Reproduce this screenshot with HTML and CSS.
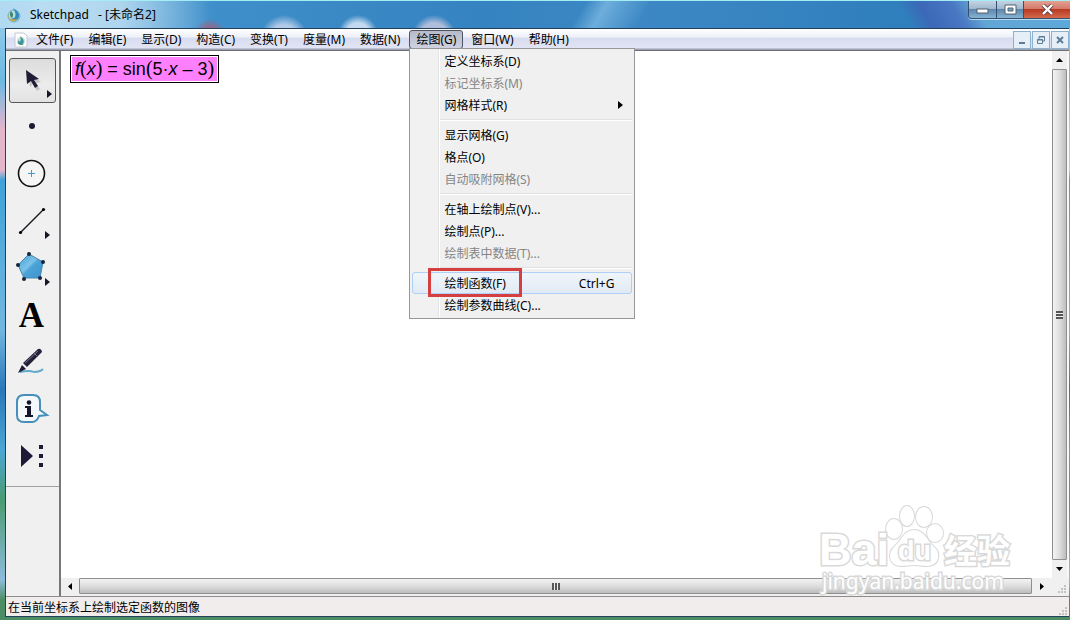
FILE: index.html
```html
<!DOCTYPE html>
<html lang="zh-CN">
<head>
    <meta charset="UTF-8">
    <meta name="viewport" content="width=device-width, initial-scale=1.0">
    <title>Sketchpad - [未命名2]</title>
    <link rel="stylesheet" href="styles.css">
</head>
<body>
    <header class="titlebar">
        <svg class="app-icon" viewBox="0 0 16 16" width="16" height="16">
            <circle cx="8" cy="9" r="6" fill="#b9dfe6" stroke="#6fa9c5"/>
            <path d="M7 1c5 3 8 7 5 11-2 3-6 2-6-1 4 1 5-4 1-10z" fill="#3287bb"/>
            <path d="M2 7c1 5 4 6 9 5-2 4-9 3-9-5z" fill="#c9a441"/>
            <path d="M5 4c2 2 3 4 1 7-2-1-3-4-1-7z" fill="#3c8c6c"/>
        </svg>
        <h1 class="title">Sketchpad&nbsp;&nbsp; - [未命名2]</h1>
        <div class="window-buttons">
            <button class="win-btn" aria-label="最小化">
                <svg width="13" height="11" viewBox="0 0 13 11"><rect x="1" y="5" width="11" height="4" fill="#fff" stroke="#53606c"/></svg>
            </button>
            <button class="win-btn win-max" aria-label="最大化">
                <svg width="13" height="11" viewBox="0 0 13 11"><path d="M1 1h11v9H1z" fill="#fff" stroke="#53606c"/><path d="M4 4h5v3H4z" fill="#6fa3c8" stroke="#53606c"/></svg>
            </button>
            <button class="win-btn win-close" aria-label="关闭">
                <svg width="13" height="11" viewBox="0 0 13 11"><path d="M2 1l9 9M11 1l-9 9" stroke="#66404a" stroke-width="4"/><path d="M2 1l9 9M11 1l-9 9" stroke="#fff" stroke-width="2.4"/></svg>
            </button>
        </div>
    </header>

    <div class="window">
        <nav class="menubar">
            <svg class="doc-icon" viewBox="0 0 14 16" width="14" height="16">
                <path d="M1 1h9l3 3v11H1z" fill="#fff" stroke="#c3c8d3"/>
                <circle cx="7" cy="9" r="4" fill="#c7e2cd"/>
                <path d="M6 4c4 3 5 6 2 9-4 0-5-3-3-5 0 3 3 2 1-4z" fill="#3d93a5"/>
                <path d="M3 9c1 3 4 4 7 3-2 2-6 1-7-3z" fill="#4b9b52"/>
            </svg>
            <button class="menu-btn">文件(F)</button>
            <button class="menu-btn">编辑(E)</button>
            <button class="menu-btn">显示(D)</button>
            <button class="menu-btn">构造(C)</button>
            <button class="menu-btn">变换(T)</button>
            <button class="menu-btn">度量(M)</button>
            <button class="menu-btn">数据(N)</button>
            <div class="menu-wrap">
                <button class="menu-btn open" aria-expanded="true">绘图(G)</button>
                <div class="dropdown">
                    <button class="item">定义坐标系(D)</button>
                    <button class="item" disabled>标记坐标系(M)</button>
                    <button class="item">网格样式(R)
                        <svg width="5" height="8" viewBox="0 0 5 8"><path d="M0 0l5 4-5 4z"/></svg>
                    </button>
                    <hr>
                    <button class="item">显示网格(G)</button>
                    <button class="item">格点(O)</button>
                    <button class="item" disabled>自动吸附网格(S)</button>
                    <hr>
                    <button class="item">在轴上绘制点(V)...</button>
                    <button class="item">绘制点(P)...</button>
                    <button class="item" disabled>绘制表中数据(T)...</button>
                    <hr>
                    <button class="item active">绘制函数(F)<span class="shortcut">Ctrl+G</span><span class="mark"></span></button>
                    <button class="item">绘制参数曲线(C)...</button>
                </div>
            </div>
            <button class="menu-btn">窗口(W)</button>
            <button class="menu-btn">帮助(H)</button>
            <div class="doc-buttons">
                <button class="doc-btn" aria-label="最小化文档">
                    <svg width="10" height="10" viewBox="0 0 10 10"><path d="M2 8h6" stroke="#5d7d99" stroke-width="2"/></svg>
                </button>
                <button class="doc-btn" aria-label="还原文档">
                    <svg width="10" height="10" viewBox="0 0 10 10" fill="none" stroke="#5d7d99"><path d="M3 4V1.500h5.500V6H7M3 2h6M1.500 4.500h5v4h-5zM1 5h6"/></svg>
                </button>
                <button class="doc-btn" aria-label="关闭文档">
                    <svg width="10" height="10" viewBox="0 0 10 10"><path d="M2 2l6 6M8 2l-6 6" stroke="#5d7d99" stroke-width="2"/></svg>
                </button>
            </div>
        </nav>

        <div class="workspace">
            <aside class="toolbox">
                <button class="tool selected" aria-label="移动箭头工具">
                    <svg viewBox="0 0 45 43" width="45" height="43">
                        <path d="M18 13l2 15 3-3 4 7 3-2-4-6 5-1z" fill="#999" opacity=".45"/>
                        <path d="M16 11l1 14 4-3 4 7 3-2-4-6 5-1z" fill="#211b36"/>
                        <path d="M37 31l5 4-5 4z" fill="#191526"/>
                    </svg>
                </button>
                <button class="tool" aria-label="点工具">
                    <svg viewBox="0 0 45 43" width="45" height="43"><circle cx="22" cy="20" r="3" fill="#1e1935"/></svg>
                </button>
                <button class="tool" aria-label="圆工具">
                    <svg viewBox="0 0 45 43" width="45" height="43">
                        <circle cx="21.500" cy="20.500" r="13" fill="#f5f5f5" stroke="#111" stroke-width="1.600"/>
                        <path d="M18 20.500h7M21.500 17v7" stroke="#3e9bcc"/>
                    </svg>
                </button>
                <button class="tool" aria-label="线段工具">
                    <svg viewBox="0 0 45 43" width="45" height="43">
                        <path d="M10 33L34 9" stroke="#1b1b24" stroke-width="1.400"/>
                        <circle cx="10.500" cy="32.500" r="1.600"/><circle cx="33.500" cy="9.500" r="1.600"/>
                        <path d="M35 31l5 4-5 4z" fill="#191526"/>
                    </svg>
                </button>
                <button class="tool" aria-label="多边形工具">
                    <svg viewBox="0 0 45 43" width="45" height="43">
                        <defs>
                            <linearGradient id="poly" x1="0" y1="0" x2="1" y2="1">
                                <stop offset="0" stop-color="#3f9ad0"/>
                                <stop offset=".45" stop-color="#7cc3ea"/>
                                <stop offset=".55" stop-color="#4ba2d6"/>
                                <stop offset="1" stop-color="#3c94cc"/>
                            </linearGradient>
                        </defs>
                        <path d="M19 7l14 8-3 16H14L8 18z" fill="url(#poly)" stroke="#4288b2"/>
                        <g fill="#17243d"><circle cx="19" cy="7" r="2"/><circle cx="33" cy="15" r="2"/><circle cx="30" cy="31" r="2"/><circle cx="14" cy="32" r="2"/><circle cx="8" cy="18" r="2"/></g>
                        <path d="M35 31l5 4-5 4z" fill="#191526"/>
                    </svg>
                </button>
                <button class="tool tool-text" aria-label="文本工具">A</button>
                <button class="tool" aria-label="标识工具">
                    <svg viewBox="0 0 45 43" width="45" height="43">
                        <path d="M10 31q9-2 14 0 6 0 9-3" fill="none" stroke="#5fa9c9" stroke-width="1.800"/>
                        <path d="M8 32l4-8 4 4z" fill="#1e1935"/>
                        <path d="M13 22L28 8q3-1 4 3L17 26z" fill="#25203a"/>
                        <path d="M15 22L28 10M24 12l4 4" stroke="#77728c" fill="none"/>
                    </svg>
                </button>
                <button class="tool" aria-label="信息工具">
                    <svg viewBox="0 0 45 43" width="45" height="43">
                        <path d="M14 7h9q7 0 7 7v8l7 5-8 1q-2 6-7 6h-8q-7 0-7-7V14q0-7 7-7z" fill="#f4f8fa" stroke="#458fba" stroke-width="2"/>
                        <circle cx="19" cy="14.500" r="2.300" fill="#16142a"/>
                        <path d="M15 18h6v9h2v2h-8v-2h2v-7h-2z" fill="#16142a"/>
                    </svg>
                </button>
                <button class="tool" aria-label="自定义工具">
                    <svg viewBox="0 0 45 43" width="45" height="43" fill="#1e1935">
                        <path d="M11 10l12 11-12 11z"/><path d="M29 10h4v4h-4zM29 19h4v4h-4zM29 28h4v4h-4z"/>
                    </svg>
                </button>
            </aside>

            <main class="sketch">
                <div class="formula"><i>f</i><span class="paren">(</span><i>x</i><span class="paren">)</span> = sin<span class="paren">(</span>5·<i>x</i> – 3<span class="paren">)</span></div>
            </main>

            <div class="scroll vscroll">
                <button class="arrow" aria-label="向上滚动"><svg width="7" height="4" viewBox="0 0 7 4"><path d="M0 4l3.500-4L7 4z"/></svg></button>
                <div class="thumb"><span class="grip"></span></div>
                <button class="arrow" aria-label="向下滚动"><svg width="7" height="4" viewBox="0 0 7 4"><path d="M0 0l3.500 4L7 0z"/></svg></button>
            </div>
            <div class="scroll hscroll">
                <button class="arrow" aria-label="向左滚动"><svg width="4" height="7" viewBox="0 0 4 7"><path d="M4 0L0 3.500 4 7z"/></svg></button>
                <div class="thumb"><span class="grip"></span></div>
                <button class="arrow" aria-label="向右滚动"><svg width="4" height="7" viewBox="0 0 4 7"><path d="M0 0l4 3.500L0 7z"/></svg></button>
            </div>
            <div class="corner"><svg class="size-grip" width="10" height="10" viewBox="0 0 10 10"><path d="M7 1h2v2H7zM4 4h2v2H4zM7 4h2v2H7zM1 7h2v2H1zM4 7h2v2H4zM7 7h2v2H7z"/></svg></div>
        </div>

        <footer class="statusbar">
            <span>在当前坐标系上绘制选定函数的图像</span>
            <svg class="size-grip" width="10" height="10" viewBox="0 0 10 10"><path d="M7 1h2v2H7zM4 4h2v2H4zM7 4h2v2H7zM1 7h2v2H1zM4 7h2v2H4zM7 7h2v2H7z"/></svg>
        </footer>
    </div>

    <svg class="watermark" width="200" height="100" viewBox="0 0 200 100">
        <g class="wm-shape">
            <ellipse cx="84" cy="38" rx="8" ry="10"/>
            <ellipse cx="97" cy="25" rx="7" ry="10"/>
            <ellipse cx="114" cy="26" rx="8" ry="10"/>
            <ellipse cx="125" cy="42" rx="8" ry="9"/>
            <path d="M104 39c10 0 13 10 19 16 9 7 6 20-6 20-5 0-8-1-13-1s-8 1-13 1c-11 0-15-12-6-20 7-6 9-16 19-16z"/>
        </g>
        <text class="wm-brand" x="9" y="74">Bai</text>
        <text class="wm-du" x="88" y="69">du</text>
        <text class="wm-cjk" x="134" y="72">经验</text>
        <text class="wm-url" x="12" y="98">jingyan.baidu.com</text>
    </svg>
</body>
</html>
```
FILE: styles.css
```css
* {
    box-sizing: border-box;
}
body {
    margin: 0;
    height: 100vh;
    display: flex;
    flex-direction: column;
    overflow: hidden;
    position: relative;
    font-family: "Noto Sans", "Noto Sans CJK SC", sans-serif;
    font-size: 12px;
    color: #000;
    background: linear-gradient(#9ed2ee 0, #6bb9e3 80px, #e5b5cc 130px, #e5b5cc 170px, #3fa2d8 180px, #71b7e0 330px, #2a77b9 390px, #4ba7d5 450px, #4a9b72 500px, #8dbcdb 580px, #4c8d63 600px);
}
button {
    font: inherit;
    color: inherit;
    padding: 0;
    margin: 0;
    border: none;
    background: none;
}
svg {
    display: block;
    flex: none;
}

/* title bar */
.titlebar {
    height: 28px;
    flex: none;
    display: flex;
    align-items: center;
    padding-left: 6px;
    border-top: 1px solid #a5edf5;
    background:
        radial-gradient(circle at 210px 34px, #a4607f 6px, transparent 16px),
        radial-gradient(circle at 284px 38px, #b4cbe8 14px, transparent 24px),
        radial-gradient(circle at 358px 34px, #c3d9f0 12px, transparent 20px),
        radial-gradient(circle at 434px 36px, #b0bddb 14px, transparent 22px),
        radial-gradient(circle at 80px 12px, rgba(205, 231, 247, 0.7) 40px, transparent 130px),
        linear-gradient(120deg, transparent 54%, rgba(130, 190, 230, 0.7) 56%, transparent 60%),
        linear-gradient(60deg, transparent 84%, #3c68b8 86%, #4a78c2 89%, #62a6d6 91%, #5ba9d9 100%),
        linear-gradient(90deg, #9fd2ee, #3f8fca 20%, #3583c0 45%, #3d88c4 60%, #2f7fbc 85%);
}
.app-icon {
    margin-right: 8px;
}
.title {
    margin: 0;
    font-size: 12px;
    font-weight: normal;
    line-height: 26px;
}
.window-buttons {
    align-self: flex-start;
    margin-left: auto;
    display: flex;
    border: 1px solid #35506d;
    border-top: none;
    border-right: none;
    border-radius: 0 0 0 4px;
    overflow: hidden;
    box-shadow: 0 1px 0 #b5dcf2;
}
.win-btn {
    width: 28px;
    height: 17px;
    display: grid;
    place-items: center;
    border-right: 1px solid #35506d;
    background: linear-gradient(#c4d4e2 0, #a0b8ce 45%, #5e87ae 50%, #86b4d6 100%);
}
.win-max {
    width: 27px;
}
.win-close {
    width: 46px;
    border-right: none;
    background: linear-gradient(#e3a092 0, #d37b6b 45%, #b93a23 50%, #d4694a 100%);
}

/* window body */
.window {
    flex: 1;
    min-height: 0;
    margin: 0 1px 3px 5px;
    display: flex;
    flex-direction: column;
    border: 1px solid #23405c;
    border-right: none;
    background: #f0f0f0;
}
.menubar {
    height: 22px;
    flex: none;
    display: flex;
    align-items: center;
    gap: 1px;
    padding-left: 8px;
    border-bottom: 1px solid #6f6f73;
    background: linear-gradient(#fff 0, #eef0f9 8px, #d8dcef 9px, #e0e4f4 19px, #9ea2b5 20px);
}
.menu-btn {
    height: 19px;
    padding: 0 6px;
    border: 1px solid transparent;
    line-height: 17px;
    white-space: nowrap;
}
.menu-btn.open {
    border-color: #4f5463;
    border-radius: 3px;
    background: linear-gradient(#b7bac9, #ced1df);
}
.menu-wrap {
    position: relative;
    margin-left: 1px;
}
.doc-buttons {
    margin-left: auto;
    display: flex;
    gap: 1px;
}
.doc-btn {
    width: 18px;
    height: 18px;
    display: grid;
    place-items: center;
    border: 1px solid #8fb2cc;
    background: #e6eff8;
}

/* drop-down menu */
.dropdown {
    position: absolute;
    top: 18px;
    left: 0;
    z-index: 10;
    width: 226px;
    padding: 1px 2px 2px;
    border: 1px solid #979797;
    background: linear-gradient(90deg, #f1f1f1 28px, #e2e3e3 28px, #e2e3e3 29px, #fff 29px, #fff 30px, #f0f0f0 30px);
}
.item {
    position: relative;
    display: flex;
    align-items: center;
    width: 100%;
    height: 22px;
    padding: 0 8px 0 31px;
    border: 1px solid transparent;
    border-radius: 3px;
    text-align: left;
    white-space: nowrap;
}
.item:disabled {
    color: #858585;
}
.item svg {
    margin-left: auto;
}
.item.active {
    border-color: #aecff7;
    background: linear-gradient(rgba(240, 246, 252, 0.8), rgba(221, 233, 246, 0.8));
}
.shortcut {
    margin-left: auto;
    padding-right: 9px;
}
.mark {
    position: absolute;
    left: 15px;
    top: -5px;
    width: 94px;
    height: 29px;
    border: 3px solid #d63f40;
}
.dropdown hr {
    height: 2px;
    margin: 3px 0 3px 28px;
    border: none;
    border-top: 1px solid #e0e0e0;
    background: #fff;
}

/* workspace */
.workspace {
    flex: 1;
    min-height: 0;
    display: grid;
    grid-template-columns: 55px 1fr 17px;
    grid-template-rows: 1fr 18px;
}
.toolbox {
    grid-row: 1 / 3;
    display: flex;
    flex-direction: column;
    gap: 2px;
    padding: 7px 3px 0;
    border-right: 2px solid #77777a;
    background: linear-gradient(#a0a0a0, #a0a0a0) 0 435px / 100% 1px no-repeat #f0f0f0;
}
.tool {
    height: 45px;
    flex: none;
    border: 1px solid transparent;
    border-radius: 3px;
}
.tool.selected {
    border-color: #565656;
    background: linear-gradient(#dcdcdc, #ececec 60%, #e2e2e2);
}
.tool-text {
    font-family: "Liberation Serif", serif;
    font-size: 35px;
    font-weight: bold;
    line-height: 41px;
    padding-right: 2px;
}
.sketch {
    padding: 4px 9px;
    background: #fff;
}
.formula {
    width: max-content;
    height: 28px;
    padding: 0 4px;
    border: 1px solid #000;
    box-shadow: inset 0 0 0 1px #fff;
    background: #ff80ff;
    font-family: "Liberation Sans", sans-serif;
    font-size: 18px;
    line-height: 26px;
}
.paren {
    font-family: "Liberation Serif", serif;
    font-size: 20px;
    line-height: 20px;
}
.scroll {
    display: flex;
    background: #f0f0f0;
}
.vscroll {
    flex-direction: column;
    border-right: 2px solid #f8f8f8;
}
.hscroll {
    padding-bottom: 2px;
}
.arrow {
    flex: none;
    width: 18px;
    display: grid;
    place-items: center;
}
.hscroll .arrow:last-child {
    width: 20px;
}
.vscroll .arrow {
    width: 100%;
    height: 18px;
}
.thumb {
    flex: 1;
    display: grid;
    place-items: center;
    border: 1px solid #8f8f8f;
    border-radius: 1px;
    background: linear-gradient(#f3f3f3, #dedede 50%, #bdbdbd);
}
.vscroll .thumb {
    background: linear-gradient(90deg, #f3f3f3, #dedede 50%, #bdbdbd);
}
.grip {
    width: 8px;
    height: 7px;
    background: repeating-linear-gradient(90deg, #555 0, #555 2px, #eee 2px, #eee 3px);
}
.vscroll .grip {
    width: 7px;
    height: 8px;
    background: repeating-linear-gradient(#555 0, #555 2px, #eee 2px, #eee 3px);
}
.corner {
    display: flex;
    align-items: flex-end;
    justify-content: flex-end;
    padding: 2px;
}
.size-grip {
    fill: #c2c2c2;
}

/* status bar */
.statusbar {
    height: 20px;
    flex: none;
    display: flex;
    align-items: center;
    justify-content: space-between;
    padding: 0 1px 0 2px;
    border-top: 1px solid #8c8c8c;
    background: #f1eded;
}
.statusbar .size-grip {
    align-self: flex-end;
}

/* watermark */
.watermark {
    position: absolute;
    right: 60px;
    bottom: 29px;
    overflow: visible;
    pointer-events: none;
}
.watermark text,
.wm-shape {
    fill: #fff;
    stroke: #d9d9d9;
    stroke-width: 3px;
    paint-order: stroke;
}
.wm-shape {
    stroke-width: 2px;
}
.wm-brand {
    font: bold 45px "Liberation Sans", sans-serif;
}
.wm-du {
    font: bold 27px "Liberation Sans", sans-serif;
}
.wm-cjk {
    font: bold 33px "Noto Sans CJK SC", sans-serif;
}
.wm-url {
    font: 21px "Noto Sans", sans-serif;
}
```
